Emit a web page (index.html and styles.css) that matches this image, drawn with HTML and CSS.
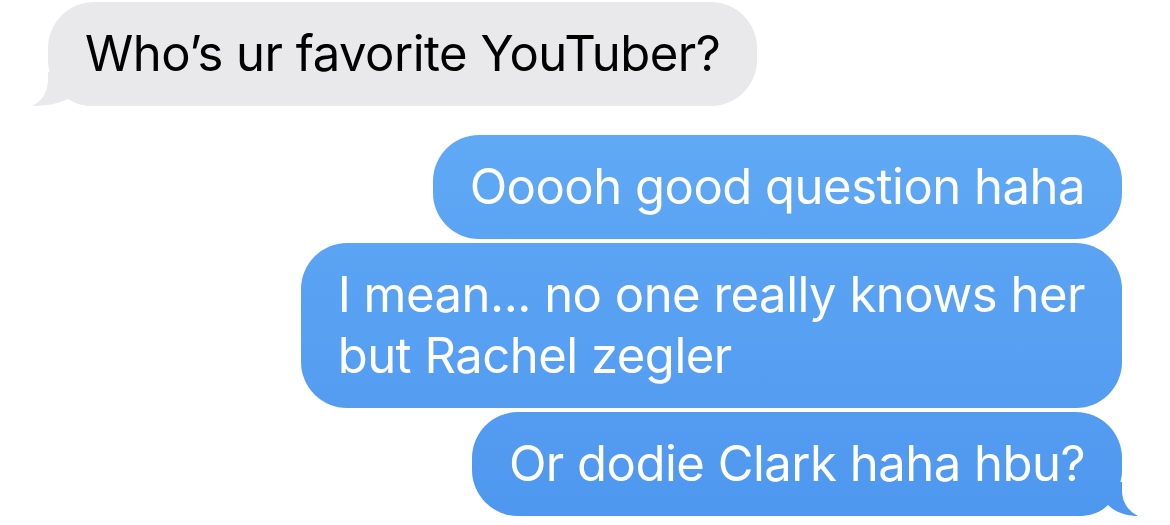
FILE: index.html
```html
<!DOCTYPE html>
<html>
<head>
    <title>Messages</title>
    <link rel="stylesheet" href="styles.css">
</head>
<body>
    <div class="thread">
        <div class="bubble received tail">Who’s ur favorite YouTuber?</div>

        <div class="group">
            <div class="bubble sent">Ooooh good question haha</div>
            <div class="bubble sent">I mean... no one really knows her<br>but Rachel zegler</div>
            <div class="bubble sent tail">Or dodie Clark haha hbu?</div>
        </div>
    </div>
</body>
</html>
```

FILE: styles.css
```css
html, body {
    margin: 0;
    height: 100%;
    background-color: #ffffff;
    font-family: Inter, "Noto Sans", sans-serif;
}

.thread {
    display: flex;
    flex-direction: column;
    padding: 2px 48px 0 48px;
}

.bubble {
    position: relative;
    font-size: 49px;
    line-height: 61px;
    letter-spacing: -0.5px;
    padding: 21px 37px 22px 37px;
    border-radius: 46px;
}

.received {
    align-self: flex-start;
    background: #e9e9eb;
    color: #000000;
}

.group {
    display: flex;
    flex-direction: column;
    align-items: flex-end;
    gap: 4px;
    margin-top: 29px;
}

.sent {
    color: #ffffff;
    background: linear-gradient(to bottom, #66aff7 0, #4e97ef 525px) fixed;
}

/* little tails under the last bubble */
.tail::after {
    content: "";
    position: absolute;
    bottom: 0;
    width: 60px;
    height: 34px;
    background: inherit;
}

.received.tail::after {
    left: -16px;
    clip-path: path("M16 0 L16 8 C16 20 10 29 0 34 C12 34 26 32 36 27 C44 32 52 34 60 34 L60 0 Z");
}

.sent.tail::after {
    right: -16px;
    clip-path: path("M44 0 L44 8 C44 20 50 29 60 34 C50 34 38 31 30 23 C22 31 12 34 0 34 L0 0 Z");
}
```
